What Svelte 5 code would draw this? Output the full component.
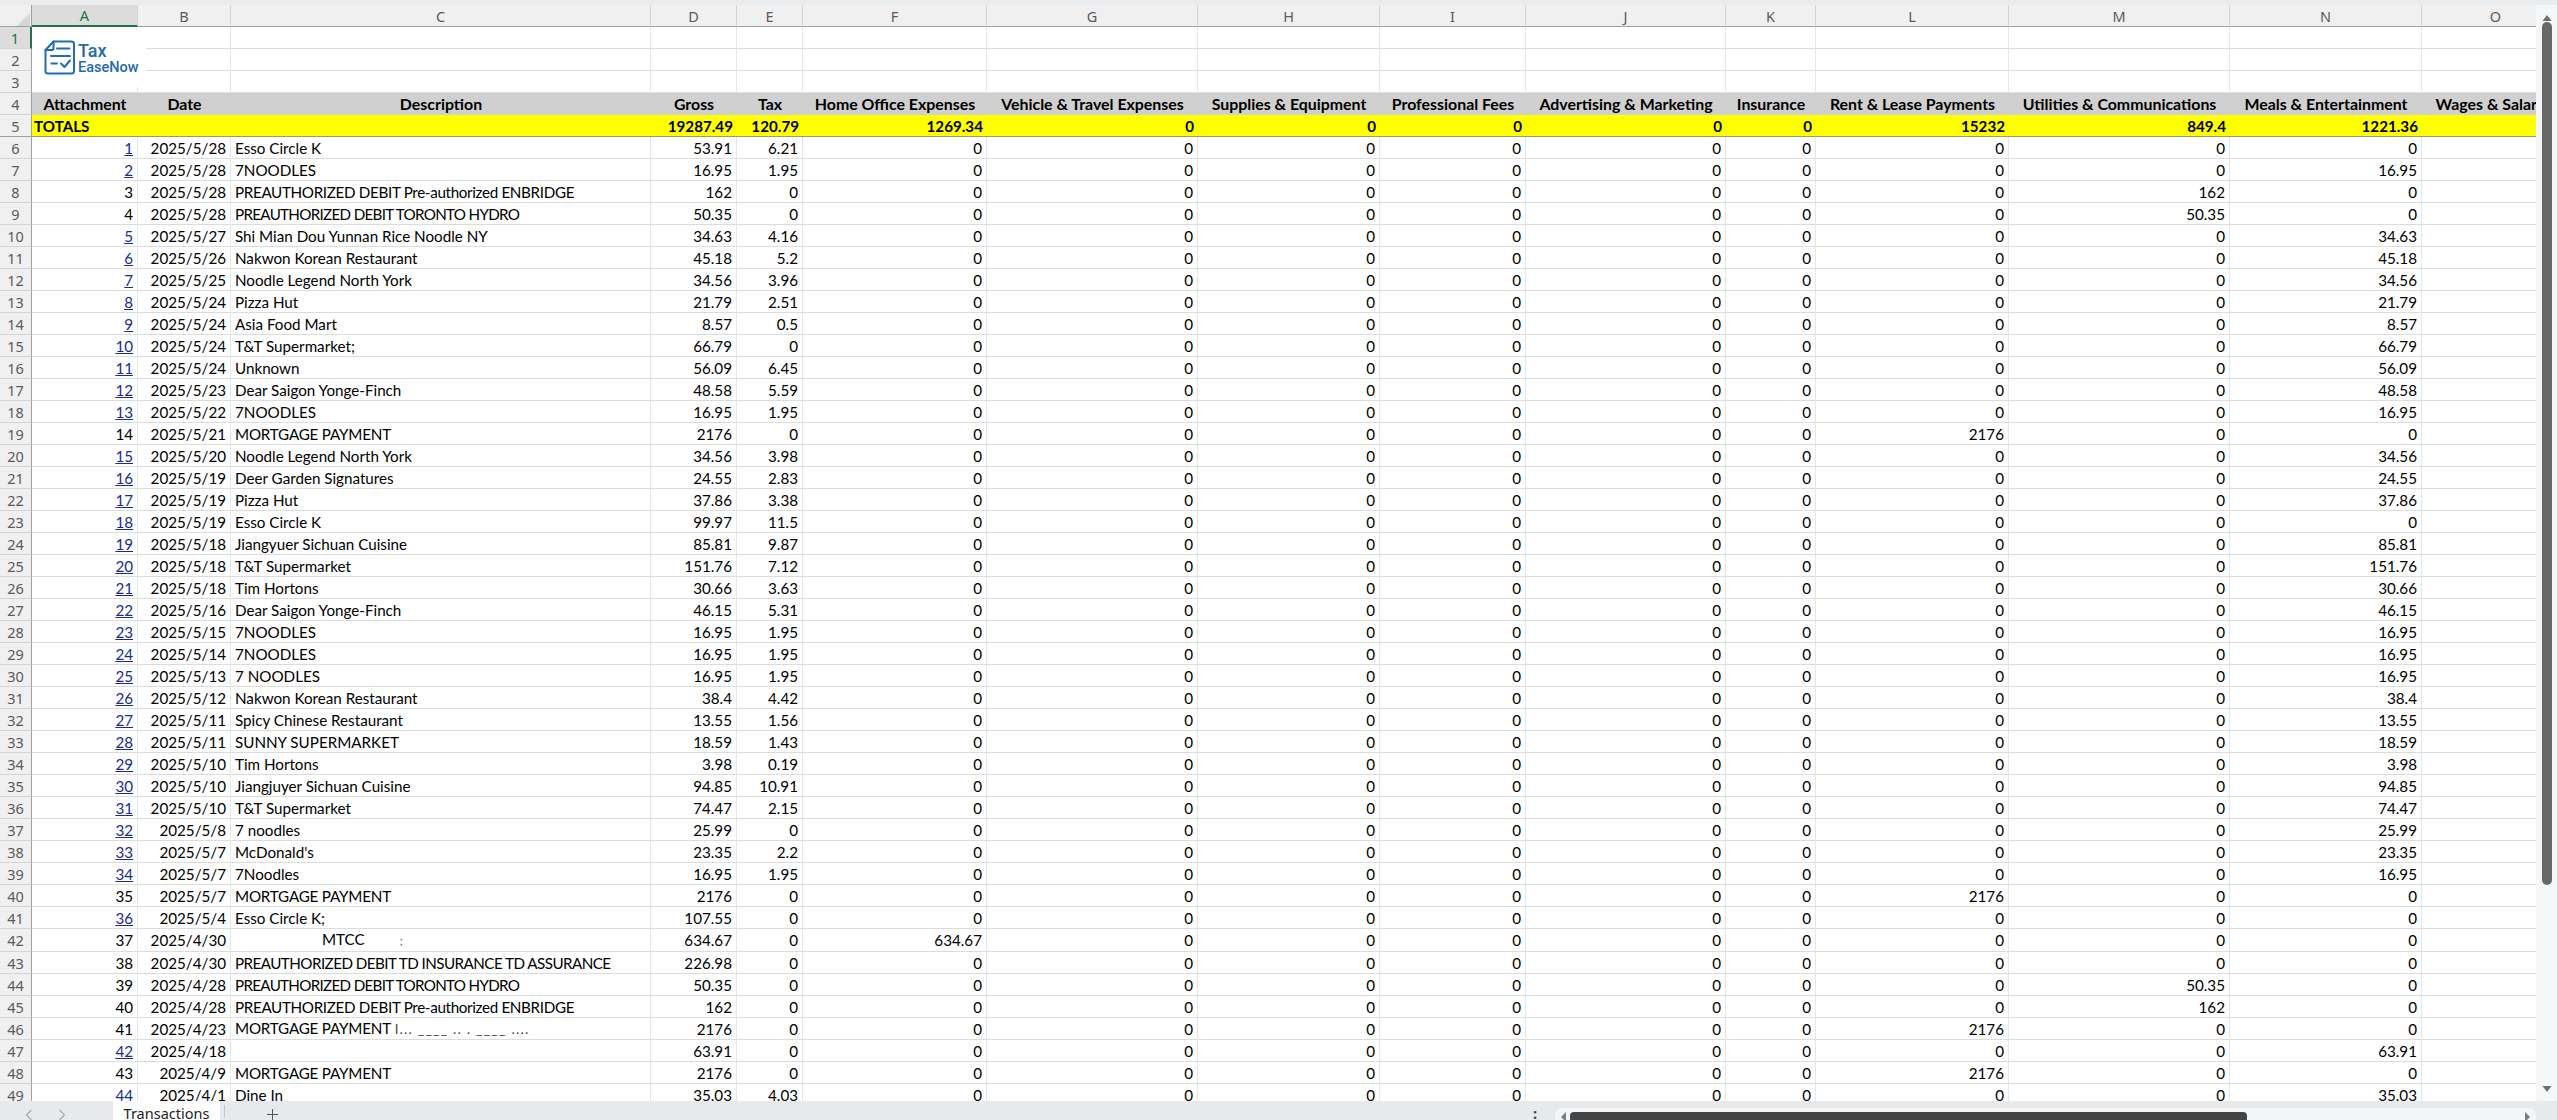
<script>
  const letters = ['A', 'B', 'C', 'D', 'E', 'F', 'G', 'H', 'I', 'J', 'K', 'L', 'M', 'N', 'O'];
  const widths = [32, 106, 93, 420, 86, 66, 184, 211, 182, 146, 200, 90, 193, 221, 192, 148];
  const headers = [
    'Attachment', 'Date', 'Description', 'Gross', 'Tax', 'Home Office Expenses',
    'Vehicle & Travel Expenses', 'Supplies & Equipment', 'Professional Fees',
    'Advertising & Marketing', 'Insurance', 'Rent & Lease Payments',
    'Utilities & Communications', 'Meals & Entertainment', 'Wages & Salaries'
  ];
  const totals = ['19287.49', '120.79', '1269.34', '0', '0', '0', '0', '0', '15232', '849.4', '1221.36'];

  const ENBRIDGE = 'PREAUTHORIZED DEBIT Pre-authorized ENBRIDGE';
  const HYDRO = 'PREAUTHORIZED DEBIT TORONTO HYDRO';
  const INSURANCE = 'PREAUTHORIZED DEBIT TD INSURANCE TD ASSURANCE';
  const MORTGAGE = 'MORTGAGE PAYMENT';

  const tightness = { [ENBRIDGE]: 'tight-m', [HYDRO]: 'tight-xl', [INSURANCE]: 'tight-l', [MORTGAGE]: 'tight-s' };

  // [attachment, linked, date, description, gross, tax, expense column]
  const rows = [
    [1, true, '2025/5/28', 'Esso Circle K', 53.91, 6.21, ''],
    [2, true, '2025/5/28', '7NOODLES', 16.95, 1.95, 'N'],
    [3, false, '2025/5/28', ENBRIDGE, 162, 0, 'M'],
    [4, false, '2025/5/28', HYDRO, 50.35, 0, 'M'],
    [5, true, '2025/5/27', 'Shi Mian Dou Yunnan Rice Noodle NY', 34.63, 4.16, 'N'],
    [6, true, '2025/5/26', 'Nakwon Korean Restaurant', 45.18, 5.2, 'N'],
    [7, true, '2025/5/25', 'Noodle Legend North York', 34.56, 3.96, 'N'],
    [8, true, '2025/5/24', 'Pizza Hut', 21.79, 2.51, 'N'],
    [9, true, '2025/5/24', 'Asia Food Mart', 8.57, 0.5, 'N'],
    [10, true, '2025/5/24', 'T&T Supermarket;', 66.79, 0, 'N'],
    [11, true, '2025/5/24', 'Unknown', 56.09, 6.45, 'N'],
    [12, true, '2025/5/23', 'Dear Saigon Yonge-Finch', 48.58, 5.59, 'N'],
    [13, true, '2025/5/22', '7NOODLES', 16.95, 1.95, 'N'],
    [14, false, '2025/5/21', MORTGAGE, 2176, 0, 'L'],
    [15, true, '2025/5/20', 'Noodle Legend North York', 34.56, 3.98, 'N'],
    [16, true, '2025/5/19', 'Deer Garden Signatures', 24.55, 2.83, 'N'],
    [17, true, '2025/5/19', 'Pizza Hut', 37.86, 3.38, 'N'],
    [18, true, '2025/5/19', 'Esso Circle K', 99.97, 11.5, ''],
    [19, true, '2025/5/18', 'Jiangyuer Sichuan Cuisine', 85.81, 9.87, 'N'],
    [20, true, '2025/5/18', 'T&T Supermarket', 151.76, 7.12, 'N'],
    [21, true, '2025/5/18', 'Tim Hortons', 30.66, 3.63, 'N'],
    [22, true, '2025/5/16', 'Dear Saigon Yonge-Finch', 46.15, 5.31, 'N'],
    [23, true, '2025/5/15', '7NOODLES', 16.95, 1.95, 'N'],
    [24, true, '2025/5/14', '7NOODLES', 16.95, 1.95, 'N'],
    [25, true, '2025/5/13', '7 NOODLES', 16.95, 1.95, 'N'],
    [26, true, '2025/5/12', 'Nakwon Korean Restaurant', 38.4, 4.42, 'N'],
    [27, true, '2025/5/11', 'Spicy Chinese Restaurant', 13.55, 1.56, 'N'],
    [28, true, '2025/5/11', 'SUNNY SUPERMARKET', 18.59, 1.43, 'N'],
    [29, true, '2025/5/10', 'Tim Hortons', 3.98, 0.19, 'N'],
    [30, true, '2025/5/10', 'Jiangjuyer Sichuan Cuisine', 94.85, 10.91, 'N'],
    [31, true, '2025/5/10', 'T&T Supermarket', 74.47, 2.15, 'N'],
    [32, true, '2025/5/8', '7 noodles', 25.99, 0, 'N'],
    [33, true, '2025/5/7', "McDonald's", 23.35, 2.2, 'N'],
    [34, true, '2025/5/7', '7Noodles', 16.95, 1.95, 'N'],
    [35, false, '2025/5/7', MORTGAGE, 2176, 0, 'L'],
    [36, true, '2025/5/4', 'Esso Circle K;', 107.55, 0, ''],
    [37, false, '2025/4/30', 'MTCC', 634.67, 0, 'F'],
    [38, false, '2025/4/30', INSURANCE, 226.98, 0, ''],
    [39, false, '2025/4/28', HYDRO, 50.35, 0, 'M'],
    [40, false, '2025/4/28', ENBRIDGE, 162, 0, 'M'],
    [41, false, '2025/4/23', MORTGAGE, 2176, 0, 'L'],
    [42, true, '2025/4/18', '', 63.91, 0, 'N'],
    [43, false, '2025/4/9', MORTGAGE, 2176, 0, 'L'],
    [44, true, '2025/4/1', 'Dine In', 35.03, 4.03, 'N']
  ];
  const expenseCols = ['F', 'G', 'H', 'I', 'J', 'K', 'L', 'M', 'N'];
</script>

<div class="app">
  <div class="topstrip"></div>

  <div class="middle">
    <div class="sheet">
      <table>
        <colgroup>
          {#each widths as w}
            <col style="width: {w}px" />
          {/each}
        </colgroup>
        <thead>
          <tr>
            <th class="corner">
              <svg width="14" height="14" viewBox="0 0 14 14"><path d="M13 1V14H0Z" fill="#d6d6d6" /></svg>
            </th>
            {#each letters as l}
              <th class:active={l === 'A'}>{l}</th>
            {/each}
          </tr>
        </thead>
        <tbody>
          {#each [1, 2, 3] as n}
            <tr>
              <th class="rowhead" class:activerow={n === 1}>{n}</th>
              {#each letters as l}
                <td></td>
              {/each}
            </tr>
          {/each}
          <tr class="titles">
            <th class="rowhead">4</th>
            {#each headers as h}
              <td>{h}</td>
            {/each}
          </tr>
          <tr class="totals">
            <th class="rowhead">5</th>
            <td class="totals-label">TOTALS</td>
            <td></td>
            <td></td>
            {#each totals as t}
              <td class="num">{t}</td>
            {/each}
            <td></td>
          </tr>
          {#each rows as r, i}
            <tr>
              <th class="rowhead">{i + 6}</th>
              <td class="num">
                {#if r[1]}<a href="#{r[0]}">{r[0]}</a>{:else}{r[0]}{/if}
              </td>
              <td class="num">{r[2]}</td>
              <td class="desc">
                {#if r[0] === 37}
                  <span class="mtcc">MTCC</span><span class="mtcc-tail">;</span>
                {:else}
                  <span class={tightness[r[3]]}>{r[3]}</span>{#if r[0] === 41}<span class="smudge">l... ____ .. . ____ ....</span>{/if}
                {/if}
              </td>
              <td class="num">{r[4]}</td>
              <td class="num">{r[5]}</td>
              {#each expenseCols as c}
                <td class="num">{c === r[6] ? r[4] : 0}</td>
              {/each}
              <td></td>
            </tr>
          {/each}
        </tbody>
      </table>

      <div class="logo">
        <svg width="34" height="38" viewBox="0 0 34 38" fill="none" stroke="#1f6db3" stroke-width="2" stroke-linecap="round" stroke-linejoin="round">
          <path d="M10.5 2.5H28.5Q31 2.500 31 5V32Q31 34.500 28.500 34.500H5Q2.500 34.500 2.500 32V11Z" />
          <path d="M2.500 11H9Q10.500 11 10.500 9.500V2.500" />
          <path d="M14 9.500H26.500" />
          <path d="M8 17H27" />
          <path d="M8.500 24.500H14" />
          <path d="M18 24.500L21.500 28L27 21.500" />
        </svg>
        <div class="logo-text">
          <span class="logo-tax">Tax</span>
          <span class="logo-name">EaseNow</span>
        </div>
      </div>
    </div>

    <div class="vscroll">
      <svg class="arrow" width="10" height="8" viewBox="0 0 10 8"><path d="M5 1L9.500 7H.5Z" fill="#6f6f6f" /></svg>
      <div class="vthumb"></div>
      <svg class="arrow" width="10" height="8" viewBox="0 0 10 8"><path d="M5 7L9.500 1H.5Z" fill="#6f6f6f" /></svg>
    </div>
  </div>

  <div class="bottombar">
    <div class="tabnav">
      <svg width="8" height="12" viewBox="0 0 8 12" fill="none" stroke="#a3a8ad" stroke-width="1.200"><path d="M6.500 1L1.500 6L6.500 11" /></svg>
      <svg width="8" height="12" viewBox="0 0 8 12" fill="none" stroke="#a3a8ad" stroke-width="1.200"><path d="M1.500 1L6.500 6L1.500 11" /></svg>
    </div>
    <div class="tab">Transactions</div>
    <div class="tabsep"></div>
    <svg class="plus" width="13" height="13" viewBox="0 0 13 13" stroke="#555" stroke-width="1"><path d="M6.500 1V12M1 6.500H12" /></svg>
    <div class="dots">:</div>
    <div class="hscroll">
      <svg width="6" height="10" viewBox="0 0 6 10"><path d="M1 5L6 0V10Z" fill="#7c7c7c" /></svg>
      <div class="hthumb"></div>
      <svg width="6" height="10" viewBox="0 0 6 10"><path d="M5 5L0 0V10Z" fill="#7c7c7c" /></svg>
    </div>
  </div>
</div>

<style>
  :global(body) {
    margin: 0;
    overflow: hidden;
    background: #e8ebee;
  }

  .app {
    width: 2557px;
    height: 1120px;
    display: flex;
    flex-direction: column;
    overflow: hidden;
    background: #e8ebee;
  }

  .topstrip {
    height: 5px;
    flex: none;
    background: #e9ecef;
  }

  .middle {
    height: 1096px;
    flex: none;
    display: flex;
  }

  .sheet {
    position: relative;
    width: 2536px;
    flex: none;
    overflow: hidden;
    background: #fff;
  }

  table {
    width: 2570px;
    table-layout: fixed;
    border-collapse: separate;
    border-spacing: 0;
    font-family: Lato, "Liberation Sans", sans-serif;
    font-size: 15.2px;
    color: #000;
  }

  tr {
    height: 22px;
  }

  th,
  td {
    box-sizing: border-box;
    height: 22px;
    padding: 0 4px;
    white-space: nowrap;
    overflow: visible;
    font-weight: 400;
    border-right: 1px solid #e4e7ea;
    border-bottom: 1px solid #dcdcdc;
    line-height: 20px;
  }

  thead th {
    position: relative;
    font-family: "Noto Sans", sans-serif;
    font-size: 14.5px;
    color: #5a5a5a;
    background: #f0f0f0;
    border-right: 1px solid #d4d4d4;
    border-bottom: 1px solid #a0a0a0;
  }

  thead th.corner {
    padding: 0;
    text-align: right;
    vertical-align: bottom;
    border-right-color: #a0a0a0;
    line-height: 0;
  }

  thead th.active {
    background: #dcdcdc;
    color: #217346;
    border-bottom: 2px solid #217346;
  }

  .rowhead {
    padding: 0;
    font-family: "Noto Sans", sans-serif;
    font-size: 14.5px;
    color: #5a5a5a;
    text-align: center;
    background: #f0f0f0;
    border-right: 1px solid #a0a0a0;
    border-bottom: 1px solid #d4d4d4;
  }

  .rowhead.activerow {
    background: #dcdcdc;
    color: #217346;
    border-right: 2px solid #217346;
  }

  .titles td {
    padding: 0;
    overflow: visible;
    text-align: center;
    font-size: 15.9px;
    font-weight: 700;
    background: #d0d0d0;
    border-right: none;
    border-bottom: none;
  }

  .totals td {
    font-weight: 700;
    background: #ffff00;
    border-right: none;
    border-bottom: 1px solid #9c9c6a;
  }

  .totals .rowhead,
  .totals th {
    border-bottom: 1px solid #a0a0a0;
  }

  .totals td.totals-label {
    padding-left: 2px;
  }

  .num {
    text-align: right;
  }

  .desc {
    overflow: hidden;
  }

  .tight-s {
    letter-spacing: -0.2px;
  }

  .tight-m {
    letter-spacing: -0.33px;
  }

  .tight-l {
    letter-spacing: -0.55px;
  }

  .tight-xl {
    letter-spacing: -0.7px;
  }

  a {
    color: #1a2a8f;
    text-decoration: underline;
  }

  .mtcc {
    margin-left: 87px;
  }

  .mtcc-tail {
    margin-left: 35px;
    font-size: 11px;
    color: #555;
  }

  .smudge {
    margin-left: 4px;
    font-size: 14px;
    letter-spacing: 1.2px;
    color: #444;
  }

  .logo {
    position: absolute;
    left: 32px;
    top: 22px;
    width: 114px;
    height: 60px;
    box-sizing: border-box;
    padding: 12px 0 0 11px;
    display: flex;
    gap: 1px;
    background: #fff;
  }

  .logo-text {
    display: flex;
    flex-direction: column;
    color: #246aae;
    font-family: Roboto, sans-serif;
    font-weight: 500;
  }

  .logo-tax {
    font-size: 18px;
    line-height: 19px;
    margin-top: 2px;
  }

  .logo-name {
    font-size: 14.5px;
    line-height: 16px;
  }

  .vscroll {
    flex: 1;
    display: flex;
    flex-direction: column;
    align-items: center;
    padding-top: 9px;
    background: #f6f7f8;
    border-radius: 0 0 8px 8px;
    height: 1100px;
    box-sizing: border-box;
  }

  .arrow {
    flex: none;
  }

  .vthumb {
    width: 10px;
    height: 863px;
    margin-bottom: 200px;
    flex: none;
    background: #686868;
    border-radius: 5px;
  }

  .bottombar {
    height: 19px;
    flex: none;
    display: flex;
    align-items: flex-start;
    background: #e6eaed;
    font-family: "Noto Sans", sans-serif;
    font-size: 14.5px;
    color: #444;
  }

  .tabnav {
    width: 113px;
    flex: none;
    display: flex;
    gap: 25px;
    padding: 8px 0 0 25px;
    box-sizing: border-box;
  }

  .tab {
    width: 107px;
    height: 19px;
    flex: none;
    text-align: center;
    line-height: 24px;
    background: #fff;
    color: #222;
    overflow: hidden;
  }

  .tabsep {
    width: 1px;
    height: 13px;
    flex: none;
    margin: 4px 0 0 4px;
    background: #c4c8cc;
  }

  .plus {
    margin: 7px 0 0 41px;
    flex: none;
  }

  .dots {
    margin-left: auto;
    width: 22px;
    flex: none;
    line-height: 25px;
    font-weight: 700;
    color: #444;
  }

  .hscroll {
    width: 981px;
    height: 12px;
    margin: 7px 21px 0 0;
    flex: none;
    display: flex;
    align-items: flex-start;
    padding: 4px 5px 0;
    box-sizing: border-box;
    background: #f3f5f7;
    border-radius: 7px 7px 0 0;
  }

  .hthumb {
    width: 677px;
    height: 8px;
    margin: 0 auto 0 4px;
    background: #444;
    border-radius: 4px 4px 0 0;
  }
</style>
